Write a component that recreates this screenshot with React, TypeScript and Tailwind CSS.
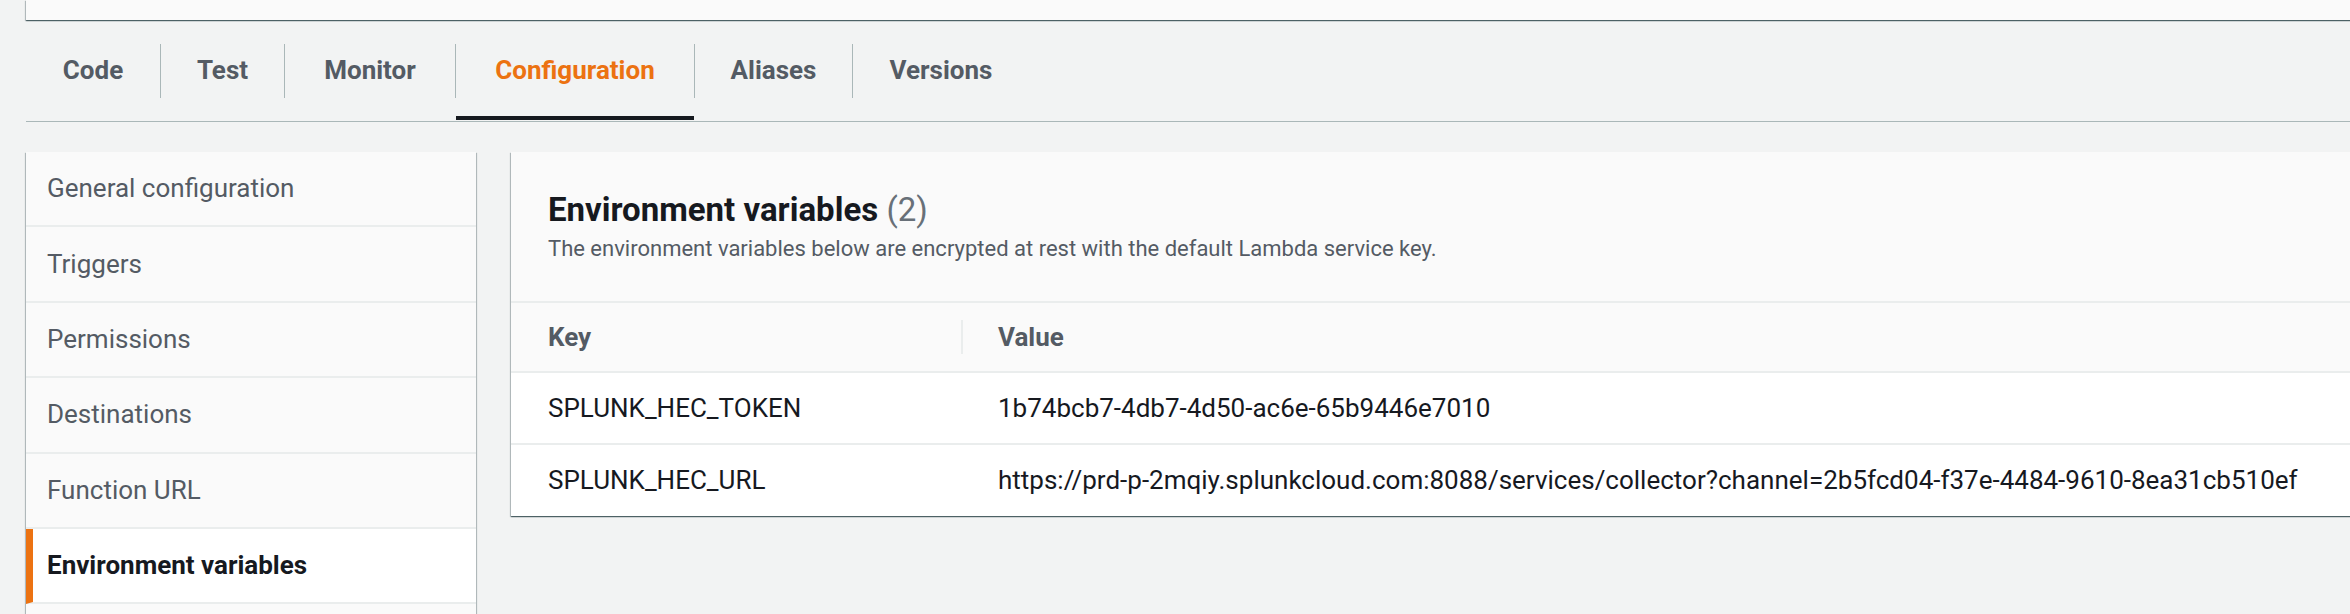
import React from "react";

const tabs = [
    { label: "Code", w: "w-[134px]" },
    { label: "Test", w: "w-[123px]" },
    { label: "Monitor", w: "w-[170px]" },
    { label: "Configuration", w: "w-[238px]", active: true },
    { label: "Aliases", w: "w-[157px]" },
    { label: "Versions", w: "w-[176px]" },
];

const sideItems = [
    "General configuration",
    "Triggers",
    "Permissions",
    "Destinations",
    "Function URL",
    "Environment variables",
];

const envVars = [
    { key: "SPLUNK_HEC_TOKEN", value: "1b74bcb7-4db7-4d50-ac6e-65b9446e7010" },
    {
        key: "SPLUNK_HEC_URL",
        value: "https://prd-p-2mqiy.splunkcloud.com:8088/services/collector?channel=2b5fcd04-f37e-4484-9610-8ea31cb510ef",
    },
];

const cardShadow =
    "shadow-[0_1px_1px_0_rgba(0,28,36,0.5),1px_1px_1px_0_rgba(0,28,36,0.2),-1px_1px_1px_0_rgba(0,28,36,0.2)]";

export default function App() {
    return (
        <div className="h-[614px] w-full overflow-hidden bg-[#f2f3f3] pl-[26px] font-['Roboto',sans-serif]">
            {/* top card (cut off) */}
            <div className={`h-[20px] -mr-4 bg-[#fafafa] ${cardShadow}`} />

            {/* Tabs */}
            <div className="flex h-[102px] border-b border-[#aab7b8]">
                {tabs.map((t, i) => (
                    <div key={t.label} className="flex items-center h-full">
                        {i > 0 && <div className="w-px h-[54px] bg-[#aab7b8]" />}
                        <div className={`flex flex-col h-full ${t.w}`}>
                            <div
                                className={`flex-1 flex items-center justify-center pt-[5px] text-[26px] font-bold ${
                                    t.active ? "text-[#ec7211]" : "text-[#545b64]"
                                }`}
                            >
                                {t.label}
                            </div>
                            <div className={`h-[4px] mb-px ${t.active ? "bg-[#16191f]" : ""}`} />
                        </div>
                    </div>
                ))}
            </div>

            <div className="flex gap-[35px] pt-[30px]">
                {/* Sidebar */}
                <div className={`w-[450px] shrink-0 bg-[#fafafa] ${cardShadow}`}>
                    {sideItems.map((item) => {
                        const active = item === "Environment variables";
                        return (
                            <div
                                key={item}
                                className={`h-[75.4px] flex items-center border-b-2 border-b-[#eaeded] text-[26px] ${
                                    active
                                        ? "bg-white border-l-[7px] border-l-[#ec7211] pl-[14px] font-bold text-[#16191f]"
                                        : "pl-[21px] text-[#545b64]"
                                }`}
                            >
                                {item}
                            </div>
                        );
                    })}
                    {/* next item, below the fold */}
                    <div className="h-[75.4px]" />
                </div>

                {/* Env vars panel */}
                <div className={`flex-1 -mr-4 self-start bg-white ${cardShadow}`}>
                    <div className="bg-[#fafafa] pl-[37px] pt-[38px] pb-[37px] border-b-2 border-[#eaeded]">
                        <h2 className="text-[33px] leading-[40px] font-bold text-[#16191f]">
                            Environment variables <span className="font-normal text-[#687078]">(2)</span>
                        </h2>
                        <p className="mt-[4px] text-[22px] leading-[30px] text-[#545b64]">
                            The environment variables below are encrypted at rest with the default Lambda service key.
                        </p>
                    </div>

                    <div className="flex h-[70px] items-center bg-[#fafafa] border-b-2 border-[#eaeded] text-[26px] font-bold text-[#545b64]">
                        <div className="w-[450px] pl-[37px]">Key</div>
                        <div className="w-[2px] h-[34px] bg-[#eaeded]" />
                        <div className="pl-[35px]">Value</div>
                    </div>

                    {envVars.map((v, i) => (
                        <div
                            key={v.key}
                            className={`flex items-center text-[26px] text-[#16191f] ${
                                i === 0 ? "h-[72px] border-b-2 border-[#eaeded]" : "h-[71px]"
                            }`}
                        >
                            <div className="w-[452px] shrink-0 pl-[37px]">{v.key}</div>
                            <div className="pl-[35px] whitespace-nowrap">{v.value}</div>
                        </div>
                    ))}
                </div>
            </div>
        </div>
    );
}
